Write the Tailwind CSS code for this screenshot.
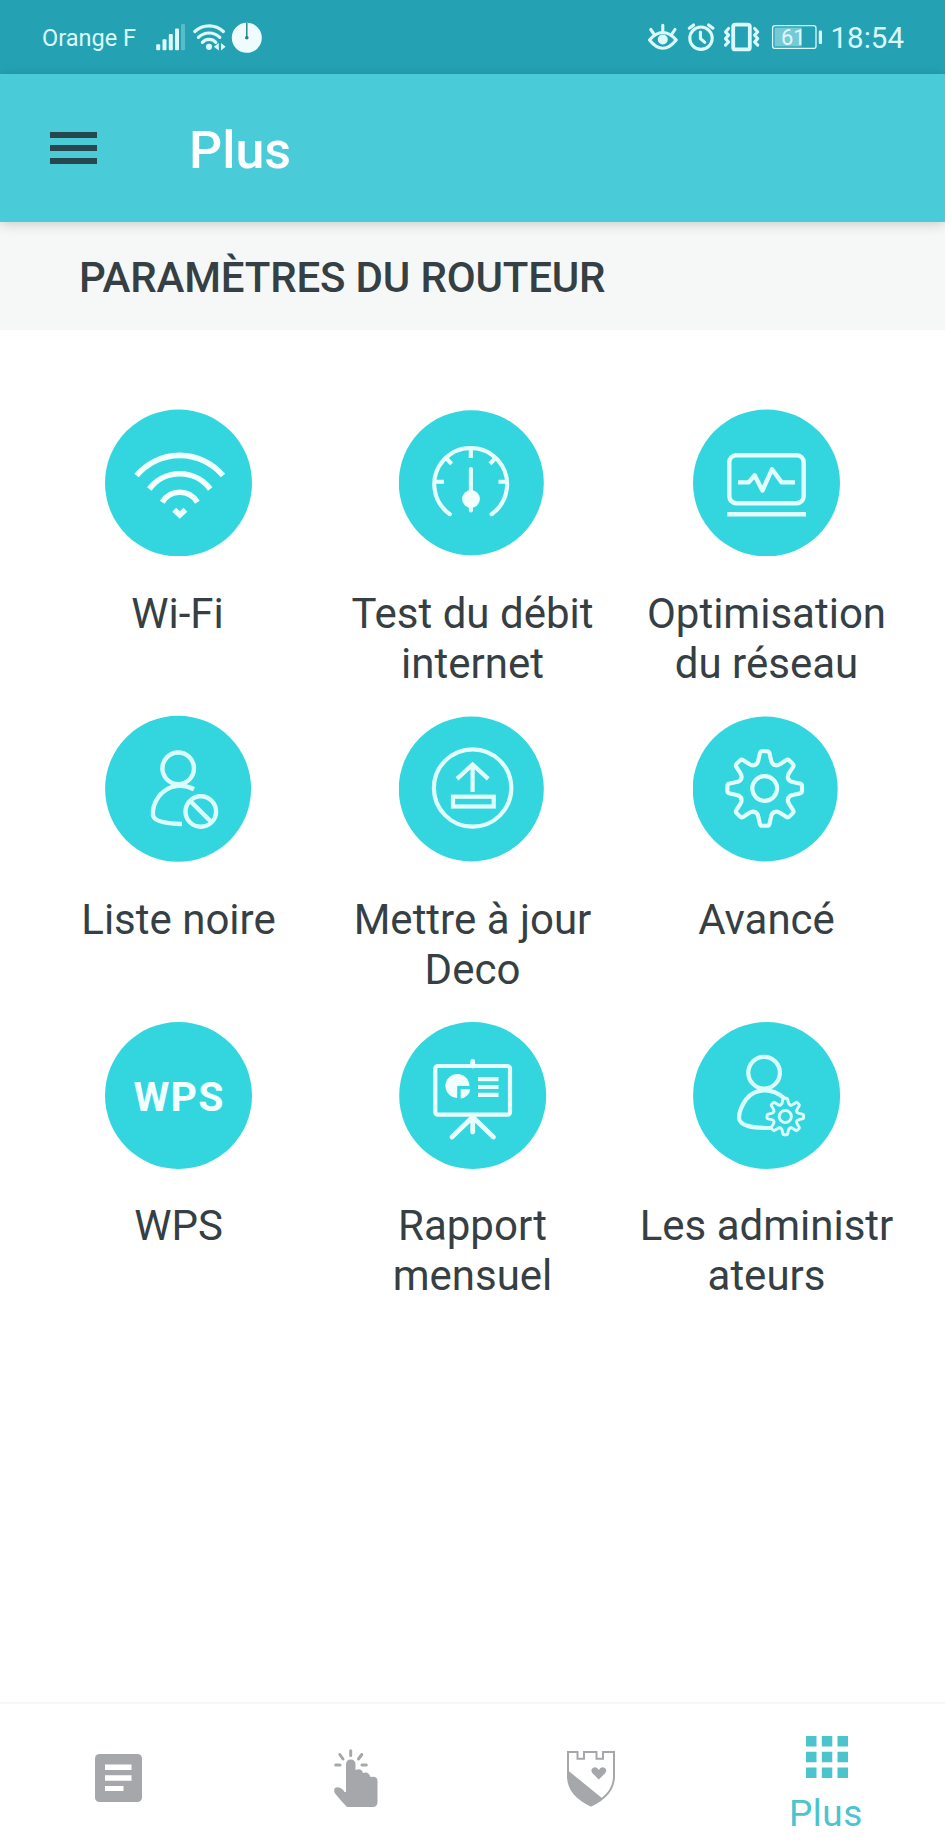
<!DOCTYPE html>
<html lang="fr">
<head>
    <meta charset="UTF-8">
    <meta name="viewport" content="width=device-width, initial-scale=1.0">
    <title>Plus</title>
    <script src="https://cdn.jsdelivr.net/npm/@tailwindcss/browser@4"></script>
</head>
<body class="bg-white font-[Roboto,sans-serif] text-[#353f44]">
    <!-- Shared gear outline: one tooth, repeated every 45 degrees -->
    <svg class="hidden">
        <defs>
            <path id="tooth" d="M-9.8-23.5Q-7-24.6-6.4-28L-4.9-35Q-4.4-37.3-2.5-37.3H2.5Q4.4-37.3 4.9-35L6.4-28Q7-24.6 9.8-23.5" />
            <g id="gear" stroke-linecap="round">
                <use href="#tooth" />
                <use href="#tooth" transform="rotate(45)" />
                <use href="#tooth" transform="rotate(90)" />
                <use href="#tooth" transform="rotate(135)" />
                <use href="#tooth" transform="rotate(180)" />
                <use href="#tooth" transform="rotate(225)" />
                <use href="#tooth" transform="rotate(270)" />
                <use href="#tooth" transform="rotate(315)" />
                <circle r="12.4" />
            </g>
        </defs>
    </svg>

    <div class="flex h-[1846px] w-[945px] flex-col overflow-hidden">
        <!-- Status bar -->
        <header class="flex h-[74px] shrink-0 items-center justify-between bg-[#24a2b4] pl-[42px] pr-[41px] text-[#dcfafc]">
            <div class="flex items-center">
                <span class="w-[113px] pt-0.5 text-[23.5px] leading-[76px]">Orange F</span>
                <svg class="h-[74px] w-[110px]" viewBox="155 0 110 74" fill="currentColor">
                    <rect x="156.2" y="44.3" width="4" height="6" rx="1" />
                    <rect x="162.5" y="39.3" width="4" height="11" rx="1" />
                    <rect x="168.8" y="34" width="4" height="16.3" rx="1" />
                    <rect x="175" y="28.5" width="4" height="21.8" rx="1" />
                    <rect x="181" y="24" width="4" height="26.3" rx="1" opacity=".3" />
                    <g fill="none" stroke="currentColor" stroke-width="3.2" stroke-linecap="round">
                        <path d="M194.8 31.5A21 21 0 0 1 223.4 31.5" />
                        <path d="M198.4 37.3A15.5 15.5 0 0 1 219.8 37.3" />
                        <path d="M202.4 42.3A9.3 9.3 0 0 1 215.8 42.3" />
                    </g>
                    <circle cx="209" cy="46.8" r="3.1" />
                    <path d="M213.8 46.8L218.8 43V50.6ZM221 43L225.6 46.8 221 50.6Z" />
                    <circle cx="246.8" cy="37.8" r="15" fill="#effcfd" />
                    <path d="M246.8 23V37" stroke="#24808e" stroke-width="1.4" />
                    <circle cx="246.8" cy="37.8" r="1.8" fill="#24808e" />
                </svg>
            </div>
            <div class="flex items-center">
                <svg class="h-[74px] w-[183px]" viewBox="648 0 183 74" fill="none" stroke="currentColor" stroke-width="3.1" stroke-linecap="round" stroke-linejoin="round">
                    <path d="M649.5 40Q656 32.5 662.8 32.5T676.2 40Q669.5 48.3 662.8 48.3T649.5 40Z" />
                    <circle cx="662.8" cy="39.5" r="5" fill="currentColor" stroke="none" />
                    <path d="M662.8 25.3V31M650.8 29.5L653.6 33.5M675 29.5L672.3 33.5" />
                    <circle cx="701" cy="38.2" r="11.2" />
                    <path d="M700.4 32V38.5L704.8 42.3M689.3 28.2L693.6 25M708.6 25L713 28.2" />
                    <rect x="733.2" y="24.6" width="16.6" height="24.8" rx="2" stroke-width="3.8" />
                    <path d="M728.6 28.5L725.5 32 728.6 35.2 725.5 38.6 728.6 42 725.5 45.2M754.6 28.5L757.7 32 754.6 35.2 757.7 38.6 754.6 42 757.7 45.2" />
                    <rect x="772.6" y="25.6" width="43.4" height="22.8" rx="2.5" stroke-width="1.3" />
                    <rect x="774.6" y="27.6" width="27" height="18.8" fill="currentColor" stroke="none" opacity=".45" />
                    <rect x="818.8" y="30.5" width="3.2" height="13.5" rx="1" fill="currentColor" stroke="none" />
                    <text x="781" y="45" font-size="22" fill="currentColor" stroke="none">61</text>
                </svg>
                <span class="pt-px text-[29.5px] leading-[74px]">18:54</span>
            </div>
        </header>

        <!-- App bar -->
        <div class="z-10 flex h-[148px] shrink-0 items-center bg-[#4acbd8] pl-[50px] shadow-[0_2px_12px_rgba(0,0,0,0.18)]">
            <svg class="h-8 w-[47px] text-[#27474f]" viewBox="0 0 47 32" fill="currentColor">
                <path d="M0 0H47V6H0ZM0 13H47V19H0ZM0 26H47V32H0Z" />
            </svg>
            <h1 class="ml-[92px] pt-[5px] text-[52px] font-medium leading-none text-white">Plus</h1>
        </div>

        <!-- Section title -->
        <h2 class="h-[108px] shrink-0 bg-[#f6f8f8] pl-[79px] text-[42px] font-medium leading-[112px] tracking-[-0.16px]">PARAMÈTRES DU ROUTEUR</h2>

        <!-- Router settings -->
        <main class="grid flex-1 auto-rows-[306px] grid-cols-[294px_294px_294px] content-start justify-center pt-[79px] text-center text-[42px] leading-[50px]">
            <div class="flex flex-col items-center gap-[33px]">
                <svg class="size-[147px] shrink-0" viewBox="0 0 147 147" fill="none" stroke="#f2ffff" stroke-width="5.6">
                    <circle cx="73.5" cy="74" r="73.5" fill="#33d6de" stroke="none" />
                    <path d="M31.5 66.5A56.5 56.5 0 0 1 118 66.5M44.3 80A38 38 0 0 1 105.2 80M57.2 93.2A20.5 20.5 0 0 1 92.4 93.2M69.2 100.8L74.8 106 80.4 100.8" />
                </svg>
                <span class="pr-0.5">Wi-Fi</span>
            </div>
            <div class="flex flex-col items-center gap-[33px]">
                <svg class="size-[147px] shrink-0" viewBox="0 0 147 147" fill="none" stroke="#e8ffff" stroke-width="4.1" stroke-linecap="round">
                    <circle cx="72.3" cy="73.8" r="72.5" fill="#33d6de" stroke="none" />
                    <path d="M50.8 105.2A36.4 36.4 0 1 1 92.6 105.2" />
                    <path d="M71.8 39V49M47.5 49.5L52.6 54.9M96.1 49.5L91 54.9M36 72.7H45M107.6 72.7H99.5" stroke-linecap="butt" />
                    <path d="M71.9 60V101.5" />
                    <circle cx="72" cy="90" r="8.9" fill="#f2ffff" stroke="none" />
                </svg>
                <span>Test du débit<br>internet</span>
            </div>
            <div class="flex flex-col items-center gap-[33px]">
                <svg class="size-[147px] shrink-0" viewBox="0 0 147 147" fill="none" stroke="#e2feff" stroke-width="4.4">
                    <circle cx="73.5" cy="74" r="73.5" fill="#33d6de" stroke="none" />
                    <rect x="36.3" y="46.2" width="74.4" height="48" rx="7" />
                    <path d="M34.3 105.2H113" />
                    <path d="M45 73.4H55.7L61.6 66.3 69.4 81.5 79 60.3 88.7 73.4H102" stroke-linejoin="round" />
                </svg>
                <span>Optimisation<br>du réseau</span>
            </div>

            <div class="flex flex-col items-center gap-[33px]">
                <svg class="size-[147px] shrink-0" viewBox="0 0 147 147" fill="none" stroke="#dcfdfe" stroke-width="4.4">
                    <circle cx="73.1" cy="73.8" r="73" fill="#33d6de" stroke="none" />
                    <circle cx="73.2" cy="53.3" r="15.8" />
                    <path d="M89 74.2C77 68 63.5 70 54.5 80.5C49.5 87 47.3 94 48 100.5C49.5 107 62 108.7 77 109" />
                    <circle cx="95.8" cy="96.5" r="15.3" />
                    <path d="M85 85.7L106.5 107.2" />
                </svg>
                <span>Liste noire</span>
            </div>
            <div class="flex flex-col items-center gap-[33px]">
                <svg class="size-[147px] shrink-0" viewBox="0 0 147 147" fill="none" stroke="#e2feff" stroke-width="4.2">
                    <circle cx="72.3" cy="74" r="72.5" fill="#33d6de" stroke="none" />
                    <circle cx="73.6" cy="73" r="38.7" />
                    <path d="M73.6 50V77M58 63.9L73.6 49.5 89.2 63.9" />
                    <rect x="54" y="81.7" width="40.7" height="9.8" />
                </svg>
                <span>Mettre à jour<br>Deco</span>
            </div>
            <div class="flex flex-col items-center gap-[33px]">
                <svg class="size-[147px] shrink-0" viewBox="0 0 147 147" fill="none" stroke="#e2feff" stroke-width="4.1">
                    <circle cx="72.2" cy="74" r="72.5" fill="#33d6de" stroke="none" />
                    <use href="#gear" transform="translate(71.7 73.5)" />
                </svg>
                <span>Avancé</span>
            </div>

            <div class="flex flex-col items-center gap-[33px]">
                <svg class="size-[147px] shrink-0 overflow-visible" viewBox="0 0 147 147">
                    <circle cx="73.5" cy="74.5" r="73.5" fill="#33d6de" />
                    <text x="73.4" y="90" text-anchor="middle" font-size="41" font-weight="700" textLength="90" fill="#f2ffff">WPS</text>
                </svg>
                <span>WPS</span>
            </div>
            <div class="flex flex-col items-center gap-[33px]">
                <svg class="size-[147px] shrink-0 overflow-visible" viewBox="0 0 147 147" fill="none" stroke="#e8feff" stroke-width="4.2">
                    <circle cx="73.7" cy="74.5" r="73.5" fill="#33d6de" stroke="none" />
                    <rect x="36.3" y="45" width="74.7" height="48.7" rx="2.5" />
                    <path d="M73.7 40.5V45M73.7 95V111M73.7 96L53 116M73.7 96L94.4 116" stroke-width="4.8" stroke-linecap="round" />
                    <path d="M58.2 65H70.4A12 12 0 1 0 58.2 77Z" fill="#f2ffff" stroke="none" />
                    <path d="M61.7 68.3H71.3A10.5 10.5 0 0 1 61.7 77.5Z" fill="#f2ffff" stroke="none" />
                    <path d="M79 58.1H99.5M79 66H99.5M79 73.8H99.5" />
                </svg>
                <span>Rapport<br>mensuel</span>
            </div>
            <div class="flex flex-col items-center gap-[33px]">
                <svg class="size-[147px] shrink-0 overflow-visible" viewBox="0 0 147 147" fill="none" stroke="#dcfdfe" stroke-width="4.2">
                    <circle cx="73.6" cy="74.5" r="73.5" fill="#33d6de" stroke="none" />
                    <circle cx="71.1" cy="51.7" r="15.8" />
                    <path d="M91 77C79 66.5 62 66.5 53 78.5C48 85.5 46 91 46 97C46.5 105.5 60 107 78 107" />
                    <circle cx="92.3" cy="95.5" r="14" fill="#33d6de" stroke="none" />
                    <use href="#gear" transform="translate(92.3 95.5) scale(.49)" fill="#33d6de" stroke-width="6" />
                </svg>
                <span>Les administr<br>ateurs</span>
            </div>
        </main>

        <!-- Bottom navigation -->
        <nav class="grid h-[144px] shrink-0 grid-cols-4 border-t-2 border-[#f8f8f8] text-[#a6a7aa]">
            <a class="flex justify-center pt-[50px]">
                <svg class="h-12 w-[47px]" viewBox="0 0 47 48">
                    <rect width="47" height="48" rx="4.5" fill="currentColor" />
                    <path d="M10 10.5H36.5V16H10ZM10 21.2H36.5V26.7H10ZM10 32H28.5V37H10Z" fill="#fff" />
                </svg>
            </a>
            <a class="flex justify-center pl-[3px] pt-[45px]">
                <svg class="h-[59px] w-[44px]" viewBox="0 0 44 59" fill="currentColor">
                    <path d="M16.7 1.7V6.5M5.8 5.5L9 10M27.8 5.5L24.5 10M1.7 16H6M28 16H32.3" fill="none" stroke="currentColor" stroke-width="3" stroke-linecap="round" />
                    <path d="M12 43V16Q12 10.5 16.7 10.5Q21.5 10.5 21.5 16V21Q27.5 18.5 29 24Q34.5 22 36.5 28Q43.5 26.5 43.5 32.5V53Q43.5 58 38.5 58H13Q3.5 48 .5 43.5Q-1 37.5 5 38.5Q9 39.5 10.5 43Z" />
                </svg>
            </a>
            <a class="flex justify-center pt-[47px]">
                <svg class="h-[56px] w-[48px]" viewBox="0 0 48 56">
                    <path d="M1 1H10.5V7.8H17V1H29.5V7.8H36V1H47V26Q46.5 44 24 54.5Q1.5 44 1 26Z" fill="none" stroke="currentColor" stroke-width="2" />
                    <path d="M1 19.5L35.5 47.5Q31 52 24 55Q1 44 1 26Z" fill="currentColor" />
                    <path d="M31.8 28.5L25.3 22Q22.8 18 26.8 16.5Q30 15.5 31.8 19Q33.6 15.5 36.8 16.5Q40.8 18 38.3 22Z" fill="currentColor" />
                </svg>
            </a>
            <a class="flex flex-col items-center pt-8 text-[#4cc4ce]">
                <svg class="h-[42px] w-[42px]" viewBox="0 0 42 42" fill="currentColor">
                    <path d="M0 0H10.5V10.5H0ZM15.8 0H26.3V10.5H15.8ZM31.5 0H42V10.5H31.5ZM0 15.8H10.5V26.3H0ZM15.8 15.8H26.3V26.3H15.8ZM31.5 15.8H42V26.3H31.5ZM0 31.5H10.5V42H0ZM15.8 31.5H26.3V42H15.8ZM31.5 31.5H42V42H31.5Z" />
                </svg>
                <span class="mt-[14px] pr-0.5 text-[37px] leading-[43px] tracking-[0.5px]">Plus</span>
            </a>
        </nav>
    </div>
</body>
</html>
